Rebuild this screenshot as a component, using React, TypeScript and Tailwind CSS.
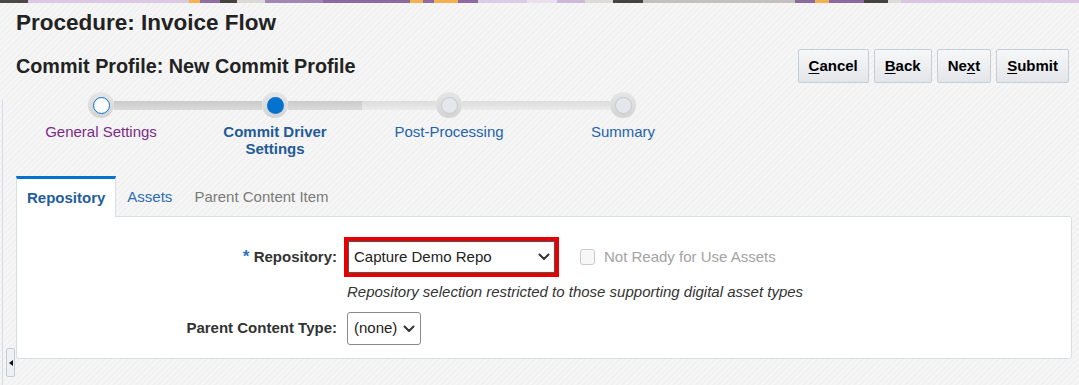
import React from "react";

const strip: [number, number, string][] = [
  [0, 28, "#4b4846"],
  [28, 189, "#dbc9e3"],
  [189, 200, "#f5b24f"],
  [200, 220, "#8f6ea2"],
  [220, 237, "#45423f"],
  [237, 265, "#dcdad8"],
  [265, 323, "#a088b2"],
  [323, 410, "#8b6a9e"],
  [410, 423, "#f4b04e"],
  [423, 434, "#8e6ca0"],
  [434, 458, "#f4b04e"],
  [458, 478, "#8d6a9f"],
  [478, 527, "#dccbe4"],
  [527, 557, "#e9dfef"],
  [557, 585, "#cdb8d8"],
  [585, 613, "#dedbd9"],
  [613, 643, "#45423f"],
  [643, 795, "#c3c0bd"],
  [795, 815, "#8c6a9e"],
  [815, 829, "#f4b04e"],
  [829, 864, "#8c6a9e"],
  [864, 888, "#45423f"],
  [888, 901, "#dedbd9"],
  [901, 1079, "#d8c6e0"],
];

type StepState = "done" | "current" | "todo";

const steps: { label: string; state: StepState; left: string; right: string }[] = [
  { label: "General Settings", state: "done", left: "none", right: "dark" },
  { label: "Commit Driver Settings", state: "current", left: "dark", right: "dark" },
  { label: "Post-Processing", state: "todo", left: "light", right: "light" },
  { label: "Summary", state: "todo", left: "light", right: "none" },
];

function Segment({ kind }: { kind: string }) {
  if (kind === "dark")
    return <div className="h-[9px] flex-1 bg-gradient-to-b from-[#cbcbcb] to-[#dadada]" />;
  if (kind === "light")
    return <div className="h-[9px] flex-1 bg-gradient-to-b from-[#dcdcdc] to-[#ebebeb]" />;
  return <div className="h-[9px] flex-1" />;
}

function Dot({ state }: { state: StepState }) {
  return (
    <div className="w-[26px] h-[26px] rounded-full bg-gradient-to-b from-[#e6e6e6] to-[#d3d3d3] flex items-center justify-center shrink-0">
      {state === "done" && (
        <div className="w-[17px] h-[17px] rounded-full bg-white border-[1.5px] border-[#0572ce]" />
      )}
      {state === "current" && <div className="w-[17px] h-[17px] rounded-full bg-[#0572ce]" />}
      {state === "todo" && (
        <div className="w-[17px] h-[17px] rounded-full bg-[#e4e8ec] border border-[#c3c9cf]" />
      )}
    </div>
  );
}

function Chevron() {
  return (
    <svg width="12" height="8" viewBox="0 0 12 8" fill="none">
      <path d="M1.5 1.5l4.5 4.5 4.5-4.5" stroke="#333" strokeWidth="2" strokeLinecap="round" strokeLinejoin="round" />
    </svg>
  );
}

function ActionButton({ before, key1, after }: { before: string; key1: string; after: string }) {
  return (
    <button className="h-[34px] px-[10px] rounded-[2px] border border-[#c4ced7] bg-gradient-to-b from-[#f6f7f8] to-[#e3e6e9] text-[15px] font-bold text-[#000]">
      {before}
      <span className="underline underline-offset-2">{key1}</span>
      {after}
    </button>
  );
}

export default function App() {
  return (
    <div className="relative w-[1079px] h-[385px] overflow-hidden font-['Liberation_Sans',Arial,sans-serif] bg-[repeating-linear-gradient(-45deg,#f6f6f6_0px,#f6f6f6_2px,#f1f1f1_2px,#f1f1f1_4px)]">
      <svg width="1079" height="3" className="block">
        {strip.map(([a, b, c]) => (
          <rect key={a} x={a} y={0} width={b - a} height={3} fill={c} />
        ))}
      </svg>

      {/* splitter on the left */}
      <div className="absolute left-[2px] top-[100px] bottom-0 w-px bg-[#d3dbe3]" />
      <div className="absolute left-[6px] top-[348px] w-[9px] h-[29px] rounded-[2px] border border-[#c5ced7] bg-[#eef1f4] flex items-center justify-center">
        <svg width="4" height="6" viewBox="0 0 4 6">
          <path d="M4 0L0 3l4 3z" fill="#111" />
        </svg>
      </div>

      <div className="px-4">
        <h1 className="mt-[6px] text-[22.5px] leading-[27px] font-bold text-[#222]">Procedure: Invoice Flow</h1>

        <div className="mt-[13px] flex items-center justify-between mr-[-6px]">
          <h2 className="text-[19.8px] leading-[24px] font-bold text-[#222]">Commit Profile: New Commit Profile</h2>
          <div className="flex gap-[5px]">
            <ActionButton before="" key1="C" after="ancel" />
            <ActionButton before="" key1="B" after="ack" />
            <ActionButton before="Ne" key1="x" after="t" />
            <ActionButton before="" key1="S" after="ubmit" />
          </div>
        </div>

        <div className="mt-[9px] ml-[-2px] flex">
          {steps.map((s) => (
            <div key={s.label} className="w-[174px] flex flex-col items-center">
              <div className="w-full flex items-center">
                <Segment kind={s.left} />
                <Dot state={s.state} />
                <Segment kind={s.right} />
              </div>
              <div
                className={
                  "mt-[5px] w-[126px] text-center text-[15px] leading-[17px] " +
                  (s.state === "done"
                    ? "text-[#7d2a86]"
                    : s.state === "current"
                    ? "font-bold text-[#235b97]"
                    : "text-[#1f63ad]")
                }
              >
                {s.label}
              </div>
            </div>
          ))}
        </div>

        <div className="mt-[19px] w-[1056px]">
          <div className="flex items-end h-[40px]">
            <div className="relative z-10 -mb-px h-[41px] px-[10px] border-t-[3px] border-t-[#0572ce] border-x border-[#d6dfe6] bg-white flex items-center text-[15px] font-bold text-[#1f5d9c]">
              Repository
            </div>
            <div className="h-[40px] pt-[3px] px-[11px] flex items-center text-[15px] text-[#2a6cb6]">Assets</div>
            <div className="h-[40px] pt-[3px] px-[11px] flex items-center text-[15px] text-[#7a7a7a]">
              Parent Content Item
            </div>
          </div>

          <div className="h-[143px] border border-[#d6dfe6] rounded-b-[3px] rounded-tr-[3px] bg-white pt-[20px]">
            <div className="flex items-center">
              <div className="w-[320px] text-right text-[15px] font-bold text-[#333]">
                <span className="text-[#2b74c5] text-[17px]">*</span> Repository:
              </div>
              <div className="ml-[7px] w-[215px] h-[40px] border-[4px] border-[#e60000] bg-white">
                <div className="h-full border border-[#555] flex items-center justify-between pl-[5px] pr-[4px] shadow-[inset_0_0_1px_#999]">
                  <span className="text-[15px] text-[#222]">Capture Demo Repo</span>
                  <Chevron />
                </div>
              </div>
              <div className="ml-[21px] w-[15px] h-[16px] rounded-[3px] border border-[#cacaca] bg-[#f7f7f7]" />
              <span className="ml-[9px] text-[15px] text-[#a3a3a3]">Not Ready for Use Assets</span>
            </div>

            <div className="mt-[7px] ml-[330px] text-[15px] leading-[16px] italic text-[#333]">
              Repository selection restricted to those supporting digital asset types
            </div>

            <div className="mt-[12px] flex items-center">
              <div className="w-[320px] text-right text-[15px] font-bold text-[#333]">Parent Content Type:</div>
              <div className="ml-[10px] w-[74px] h-[33px] rounded-[3px] border border-[#8a8a8a] flex items-center justify-between pl-[6px] pr-[5px]">
                <span className="text-[15px] text-[#222]">(none)</span>
                <Chevron />
              </div>
            </div>
          </div>
        </div>
      </div>
    </div>
  );
}
